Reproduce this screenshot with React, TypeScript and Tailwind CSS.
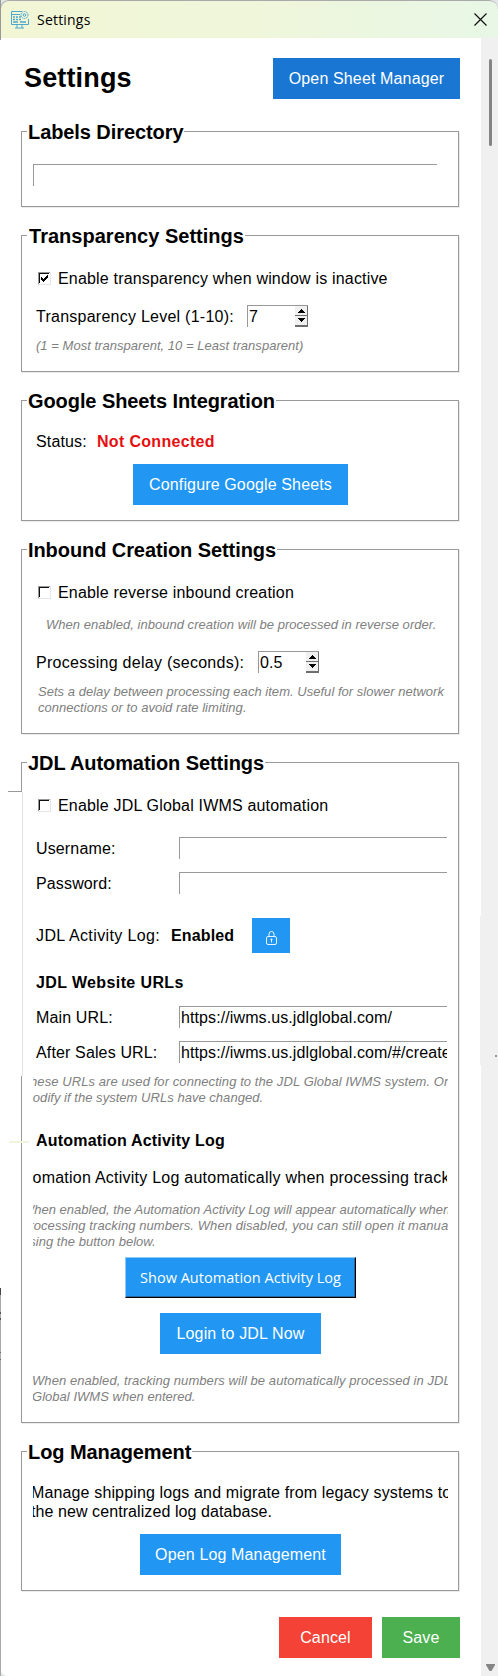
import type { ReactNode } from "react";

function Group({ title, className, children }: { title: ReactNode; className: string; children: ReactNode }) {
  return (
    <fieldset className={`relative mb-4 ml-[21px] w-[438px] border border-[#999] shadow-[1px_1px_0_#ececec] ${className}`}>
      <legend className="ml-[5px] h-[25px] px-[1px] text-[20px] leading-[27px] font-bold tracking-[-0.08px] whitespace-nowrap">
        {title}
      </legend>
      {children}
    </fieldset>
  );
}

function Check({ label, checked, className }: { label: string; checked?: boolean; className: string }) {
  return (
    <label className={`ml-4 flex h-6 items-center gap-[7px] tracking-[0.18px] whitespace-nowrap ${className}`}>
      <svg width="13" height="13" viewBox="0 0 13 13" shapeRendering="crispEdges">
        <path d="M0 0H12V1H1V12H0Z" fill="#999" />
        <path d="M1 1H11V2H2V11H1Z" fill="#111" />
        <path d="M12 0H13V13H0V12H12Z" fill="#e6e6e6" />
        {checked && <path d="M3 5H4V6H5V7H6V6H7V5H8V4H9V3H10V6H9V7H8V8H7V9H6V10H5V9H4V8H3Z" fill="#000" />}
      </svg>
      <span className="pt-[2px]">{label}</span>
    </label>
  );
}

function Spinner({ value }: { value: string }) {
  return (
    <div className="flex h-[22px] w-[61px] justify-between border-t border-l border-[#999] pl-[1px]">
      <span className="leading-[21px]">{value}</span>
      <svg width="13" height="21" viewBox="0 0 13 21" shapeRendering="crispEdges">
        <path d="M0 0H13V21H0Z" fill="#f0f0f0" />
        <path d="M12 0H13V21H0V19H12ZM0 9H13V10H0Z" fill="#6d6d6d" />
        <path d="M6 3H7V4H8V5H9V6H10V7H3V6H4V5H5V4H6ZM3 12H10V13H9V14H8V15H7V16H6V15H5V14H4V13H3Z" fill="#000" />
      </svg>
    </div>
  );
}

function Field({ label, value, className }: { label: string; value?: string; className: string }) {
  return (
    <div className={`ml-[14px] flex h-[22px] items-center whitespace-nowrap ${className}`}>
      <span className="w-[143px] shrink-0 pt-[2px]">{label}</span>
      <div className="h-[22px] w-[268px] overflow-hidden border-t border-l border-[#999] pl-[1px] leading-[21px] tracking-[0.1px]">
        {value}
      </div>
    </div>
  );
}

function Button({ children, className }: { children: ReactNode; className: string }) {
  return (
    <button className={`flex h-[41px] items-center justify-center whitespace-nowrap text-white ${className}`}>{children}</button>
  );
}

const note = "text-[13px] leading-4 italic text-[#808080] tracking-[0.03px] whitespace-nowrap";

function AppIcon() {
  return (
    <svg width="20" height="20" viewBox="0 0 20 20" fill="none" stroke="#4ba8cf" strokeWidth="1">
      <path d="M12 1.5H1.5V14.5H18.5V9M1.5 4.5H10M7 14.5V18M12 14.5V18M5 18H14" />
      <path d="M3 7H5M6 7H8M9 7H11M3 9.5H5M6 9.5H8M9 9.5H11M3 12H8M10 12H16" strokeWidth="1.5" />
      <circle cx="14.5" cy="5" r="3.5" strokeDasharray="1.6 .6" />
      <circle cx="14.5" cy="5" r="1.3" />
    </svg>
  );
}

export default function App() {
  return (
    <div className="relative flex h-[1676px] w-[498px] flex-col overflow-hidden bg-[#e3e5e8] font-['Liberation_Sans',Arial,sans-serif] text-[16px] leading-5 tracking-[0.14px] text-black">
      <header className="flex h-[38px] shrink-0 items-center rounded-t-[9px] border-t border-l border-[#aaa] bg-linear-to-r from-[#f2f6d5] via-[#eff6da] to-[#e8f7e6] pl-[9px]">
        <AppIcon />
        <span className="ml-[7px] flex-1 font-['Open_Sans','Noto_Sans',sans-serif] text-[14px] tracking-[0.2px]">Settings</span>
        <svg className="mr-[11px]" width="13" height="13" viewBox="0 0 13 13" stroke="#111" strokeWidth="1.2">
          <path d="M.5 .5L12.5 12.5M12.5 .5L.5 12.5" />
        </svg>
      </header>

      <div className="flex min-h-0 flex-1">
        <main className="w-[481px] shrink-0 rounded-bl-[8px] bg-white">
          <div className="mt-5 flex h-[41px] items-center justify-between pr-[21px] pl-6">
            <h1 className="pb-[2px] text-[27px] leading-8 font-bold tracking-[0.15px]">Settings</h1>
            <Button className="w-[187px] bg-[#1976d2]">Open Sheet Manager</Button>
          </div>
          <div className="h-5" />

          <Group title="Labels Directory" className="h-[88px]">
            <div className="mt-5 ml-[11px] h-[22px] w-[404px] border-t border-l border-[#999]" />
          </Group>

          <Group title={<span className="ml-px tracking-[0.02px]">Transparency Settings</span>} className="h-[149px]">
            <Check label="Enable transparency when window is inactive" checked className="mt-[18px]" />
            <div className="mt-[15px] ml-[14px] flex h-[22px] items-center">
              <span className="w-[211px] pt-[2px] tracking-[0.25px]">Transparency Level (1-10):</span>
              <Spinner value="7" />
            </div>
            <p className={`mt-[11px] ml-[14px] ${note}`}>(1 = Most transparent, 10 = Least transparent)</p>
          </Group>

          <Group title="Google Sheets Integration" className="h-[133px]">
            <div className="mt-[19px] ml-[14px] flex h-5">
              <span className="w-[61px]">Status:</span>
              <b className="tracking-[0.32px] text-[#e60f0f]">Not Connected</b>
            </div>
            <Button className="mt-[12px] ml-[111px] w-[215px] bg-[#2196f3]">Configure Google Sheets</Button>
          </Group>

          <Group title="Inbound Creation Settings" className="h-[197px]">
            <Check label="Enable reverse inbound creation" className="mt-[18px]" />
            <p className={`mt-[13px] ml-6 ${note}`}>When enabled, inbound creation will be processed in reverse order.</p>
            <div className="mt-[18px] ml-[14px] flex h-[22px] items-center">
              <span className="w-[222px] pt-[2px] tracking-[0.27px]">Processing delay (seconds):</span>
              <Spinner value="0.5" />
            </div>
            <p className={`mt-[11px] ml-4 ${note}`}>
              Sets a delay between processing each item. Useful for slower network
              <br />
              connections or to avoid rate limiting.
            </p>
          </Group>

          <Group title="JDL Automation Settings" className="h-[673px]">
            <Check label="Enable JDL Global IWMS automation" className="mt-[18px]" />
            <Field label="Username:" className="mt-5" />
            <Field label="Password:" className="mt-[13px]" />
            <div className="mt-6 ml-[14px] flex h-[35px] items-center">
              <span className="w-[135px] tracking-[0.38px]">JDL Activity Log:</span>
              <b className="w-[81px]">Enabled</b>
              <button className="flex h-[35px] w-[38px] items-center justify-center bg-[#2196f3] pt-1">
                <svg width="11" height="14" viewBox="0 0 11 14" fill="none" stroke="#fff" strokeWidth=".9">
                  <rect x=".5" y="5.5" width="10" height="8" rx="1.5" />
                  <path d="M3 5V3A2.5 2.5 0 0 1 8 3V5M5.5 7.5V11.5M4.5 8.5H6.5" />
                </svg>
              </button>
            </div>
            <h2 className="mt-[20px] ml-[14px] font-bold tracking-[0.38px]">JDL Website URLs</h2>
            <Field label="Main URL:" value="https://iwms.us.jdlglobal.com/" className="mt-[13px]" />
            <Field label="After Sales URL:" value="https://iwms.us.jdlglobal.com/#/createOrder" className="mt-[13px]" />
            <div className="mt-[11px] ml-[11px] w-[415px] overflow-hidden">
              <p className={`-ml-[11px] ${note}`}>
                <span className="tracking-[0.08px]">These URLs are used for connecting to the JDL Global IWMS system. Only</span>
                <br />
                modify if the system URLs have changed.
              </p>
            </div>
            <h2 className="mt-[25px] ml-[14px] font-bold tracking-[0.2px]">Automation Activity Log</h2>
            <div className="mt-[17px] ml-[11px] w-[414px] overflow-hidden">
              <p className="-ml-[70px] tracking-[0.24px] whitespace-nowrap">
                Show Automation Activity Log automatically when processing tracking numbers
              </p>
            </div>
            <div className="mt-[14px] ml-[11px] w-[415px] overflow-hidden">
              <p className={`-ml-[11px] ${note}`}>
                <span className="tracking-[0.01px]">When enabled, the Automation Activity Log will appear automatically when</span>
                <br />
                <span className="tracking-[0.08px]">processing tracking numbers. When disabled, you can still open it manually</span>
                <br />
                using the button below.
              </p>
            </div>
            <Button className="mt-[7px] ml-[103px] w-[231px] border border-t-[#8ccaf9] border-r-black border-b-black border-l-[#8ccaf9] bg-[#2196f3] font-['Open_Sans','Noto_Sans',sans-serif] text-[14.5px] tracking-[0.02px] shadow-[inset_-1px_-1px_0_#28669c]">
              Show Automation Activity Log
            </Button>
            <Button className="mt-[15px] ml-[138px] w-[161px] bg-[#2196f3]">Login to JDL Now</Button>
            <div className="mt-[19px] ml-[11px] w-[415px] overflow-hidden">
              <p className={`-ml-[1px] ${note}`}>
                <span className="tracking-[0.07px]">When enabled, tracking numbers will be automatically processed in JDL</span>
                <br />
                Global IWMS when entered.
              </p>
            </div>
            <div className="absolute top-[16px] -left-[14px] h-px w-[14px] bg-[#999]" />
            <div className="absolute top-[17px] -left-px h-[284px] w-[2px] border-r border-[#e2e2e2] bg-white" />
            <div className="absolute top-[366px] -left-[13px] h-[2px] w-5 bg-[#f1f3dc]" />
          </Group>

          <Group title="Log Management" className="h-[152px]">
            <div className="mt-[19px] ml-[11px] w-[415px] overflow-hidden">
              <p className="-ml-[2px] leading-[19px] whitespace-nowrap">
                Manage shipping logs and migrate from legacy systems to
                <br />
                <span className="tracking-[0.08px]">the new centralized log database.</span>
              </p>
            </div>
            <Button className="mt-[13px] ml-[118px] w-[201px] bg-[#2196f3]">Open Log Management</Button>
          </Group>

          <div className="mt-[26px] flex justify-end gap-[10px] pr-[21px]">
            <Button className="w-[93px] bg-[#f44336]">Cancel</Button>
            <Button className="w-[78px] bg-[#4caf50]">Save</Button>
          </div>
        </main>

        <aside className="flex w-[17px] flex-col items-center justify-between bg-[#f0f0f0] pt-[21px] pb-[5px]">
          <div className="ml-[2px] h-[87px] w-[3px] rounded-full bg-[#858585]" />
          <svg className="ml-[2px]" width="9" height="7" viewBox="0 0 9 7">
            <path d="M0 0H9V1L5.5 7H3.5L0 1Z" fill="#858585" />
          </svg>
        </aside>
      </div>

      <div className="absolute top-0 left-0 h-10 w-px bg-[#999]" />
      <div className="absolute top-[1288px] left-0 h-[388px] w-px bg-[#aaa]" />
      <div className="absolute top-[1288px] left-0 h-[7px] w-px bg-[#444]" />
      <div className="absolute top-[1312px] left-0 h-[8px] w-px border-y-2 border-[#555]" />
      <div className="absolute top-[1352px] left-0 h-[8px] w-px border-y border-[#666]" />
      <div className="absolute top-[916px] left-[480px] h-[149px] w-px bg-[#f0f0f0]" />
      <div className="absolute top-[1055px] left-[495px] h-[2px] w-[2px] bg-[#999]" />
    </div>
  );
}
